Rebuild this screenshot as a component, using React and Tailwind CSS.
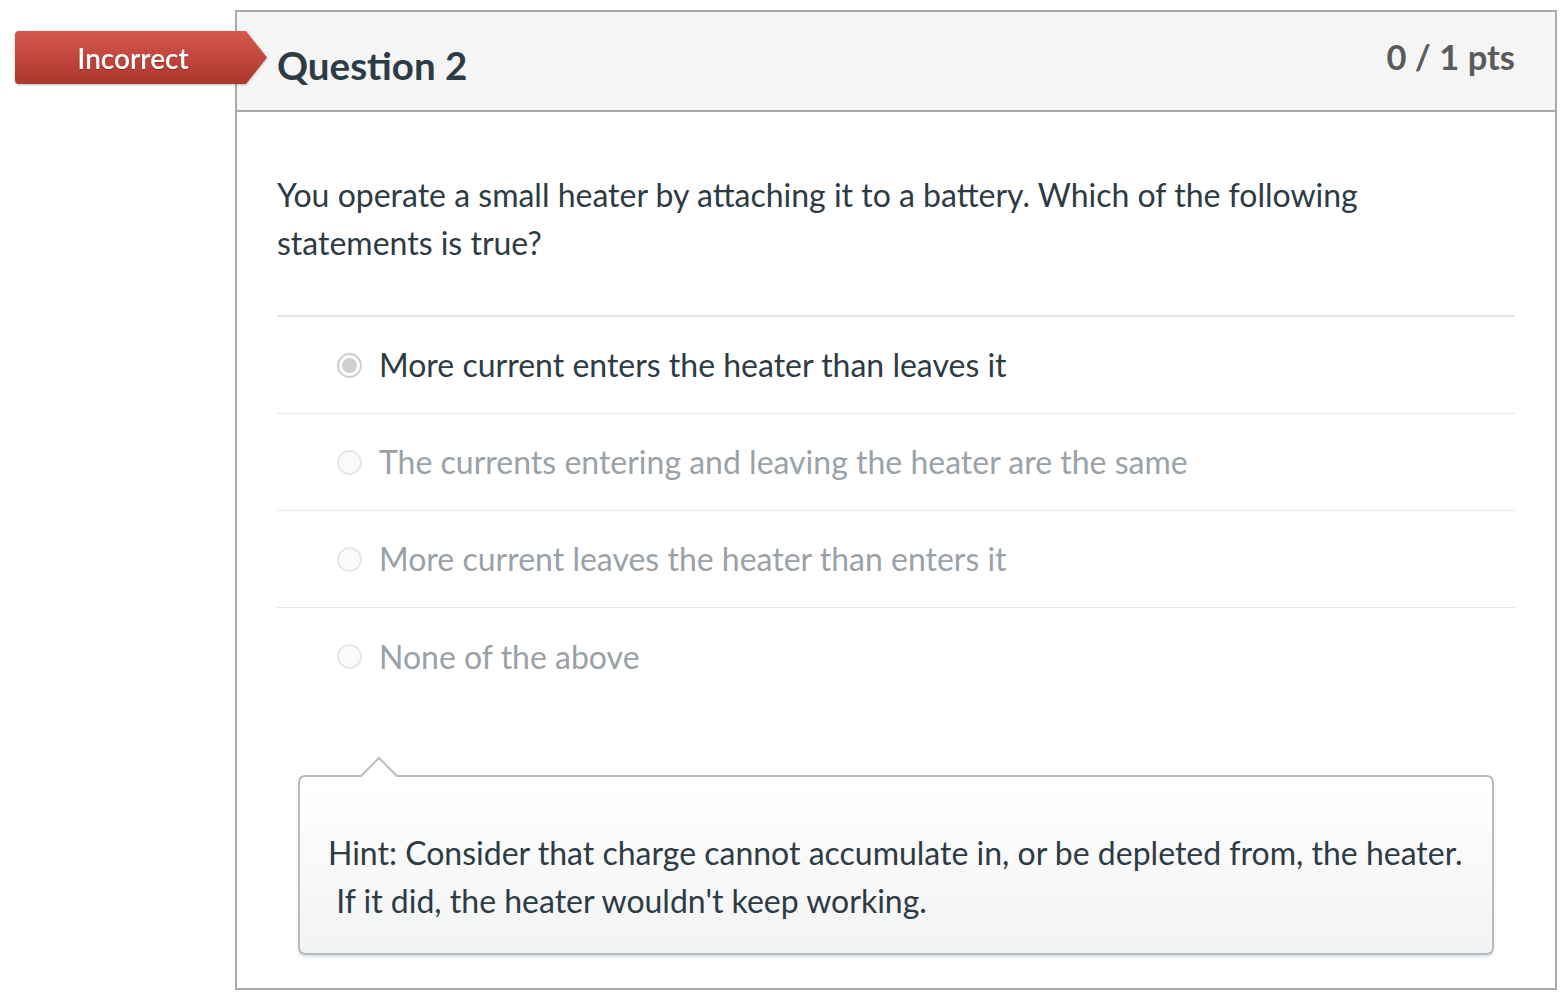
import React from "react";

const ANSWERS = [
  { text: "More current enters the heater than leaves it", selected: true },
  { text: "The currents entering and leaving the heater are the same" },
  { text: "More current leaves the heater than enters it" },
  { text: "None of the above" },
];

function Radio({ selected }) {
  return (
    <span
      className={`flex h-[25px] w-[25px] shrink-0 items-center justify-center rounded-full border-2 ${
        selected ? "border-[#cfcfcf] bg-white" : "border-[#e6e6e6] bg-[#fafafa]"
      }`}
    >
      {selected && <span className="h-[15px] w-[15px] rounded-full bg-[#cfcfcf]" />}
    </span>
  );
}

export default function App() {
  return (
    <div
      className="relative h-[1006px] w-[1566px] bg-white"
      style={{ fontFamily: "Lato, 'Open Sans', sans-serif" }}
    >
      {/* CARD */}
      <div className="absolute left-[235px] top-[10px] w-[1322px] border-2 border-[#aaaaaa]">
        {/* HEADER */}
        <div className="flex h-[100px] items-start justify-between border-b-2 border-[#aaaaaa] bg-[#f5f5f5] px-[40px]">
          <h2 className="mt-[34px] text-[38.5px] font-bold leading-none text-[#2d3b45]">
            Question 2
          </h2>
          <div className="mt-[28px] text-[34.5px] font-bold leading-none text-[#5b5b5b]">
            0 / 1 pts
          </div>
        </div>

        {/* BODY */}
        <div className="px-[40px] pb-[33px] pt-[59px]">
          <p className="text-[32px] leading-[48px] text-[#2d3b45]">
            You operate a small heater by attaching it to a battery. Which of the following
            <br />
            statements is true?
          </p>

          <div className="mt-[48px] border-t-2 border-[#e5e5e5]">
            {ANSWERS.map((a, i) => (
              <div
                key={i}
                className={`flex h-[97px] items-center gap-[17px] pl-[60px] ${
                  i < ANSWERS.length - 1 ? "border-b border-[#e8e8e8]" : ""
                }`}
              >
                <Radio selected={a.selected} />
                <span
                  className={`text-[32px] ${
                    a.selected ? "text-[#2d3b45]" : "text-[#9aa2a8]"
                  }`}
                >
                  {a.text}
                </span>
              </div>
            ))}
          </div>

          {/* HINT */}
          <div className="relative ml-[21px] mr-[21px] mt-[70px] rounded-[7px] border-2 border-[#b5bdc4] bg-gradient-to-b from-white to-[#f2f3f4] px-[28px] pb-[28px] pt-[52px] shadow-[0_2px_3px_rgba(0,0,0,0.12)]">
            <div className="absolute -top-[19px] left-[66px] h-[26px] w-[26px] translate-y-[4px] rotate-45 border-l-2 border-t-2 border-[#b5bdc4] bg-white" />
            <p className="relative whitespace-nowrap text-[32px] leading-[48px] text-[#2d3b45]">
              Hint: Consider that charge cannot accumulate in, or be depleted from, the heater.
              <br />
              &nbsp;If it did, the heater wouldn't keep working.
            </p>
          </div>
        </div>
      </div>

      {/* INCORRECT BADGE */}
      <div className="absolute left-[15px] top-[31px] z-10 h-[53px] w-[252px] drop-shadow-[0_1px_1px_rgba(0,0,0,0.25)]">
        <div className="flex h-full w-full items-center rounded-l-[4px] bg-gradient-to-b from-[#d6574d] to-[#ad362d] [clip-path:polygon(0_0,231px_0,100%_50%,231px_100%,0_100%)]">
          <span className="w-[236px] text-center text-[28px] font-semibold text-white [text-shadow:0_1px_1px_rgba(0,0,0,0.3)]">
            Incorrect
          </span>
        </div>
      </div>
    </div>
  );
}
